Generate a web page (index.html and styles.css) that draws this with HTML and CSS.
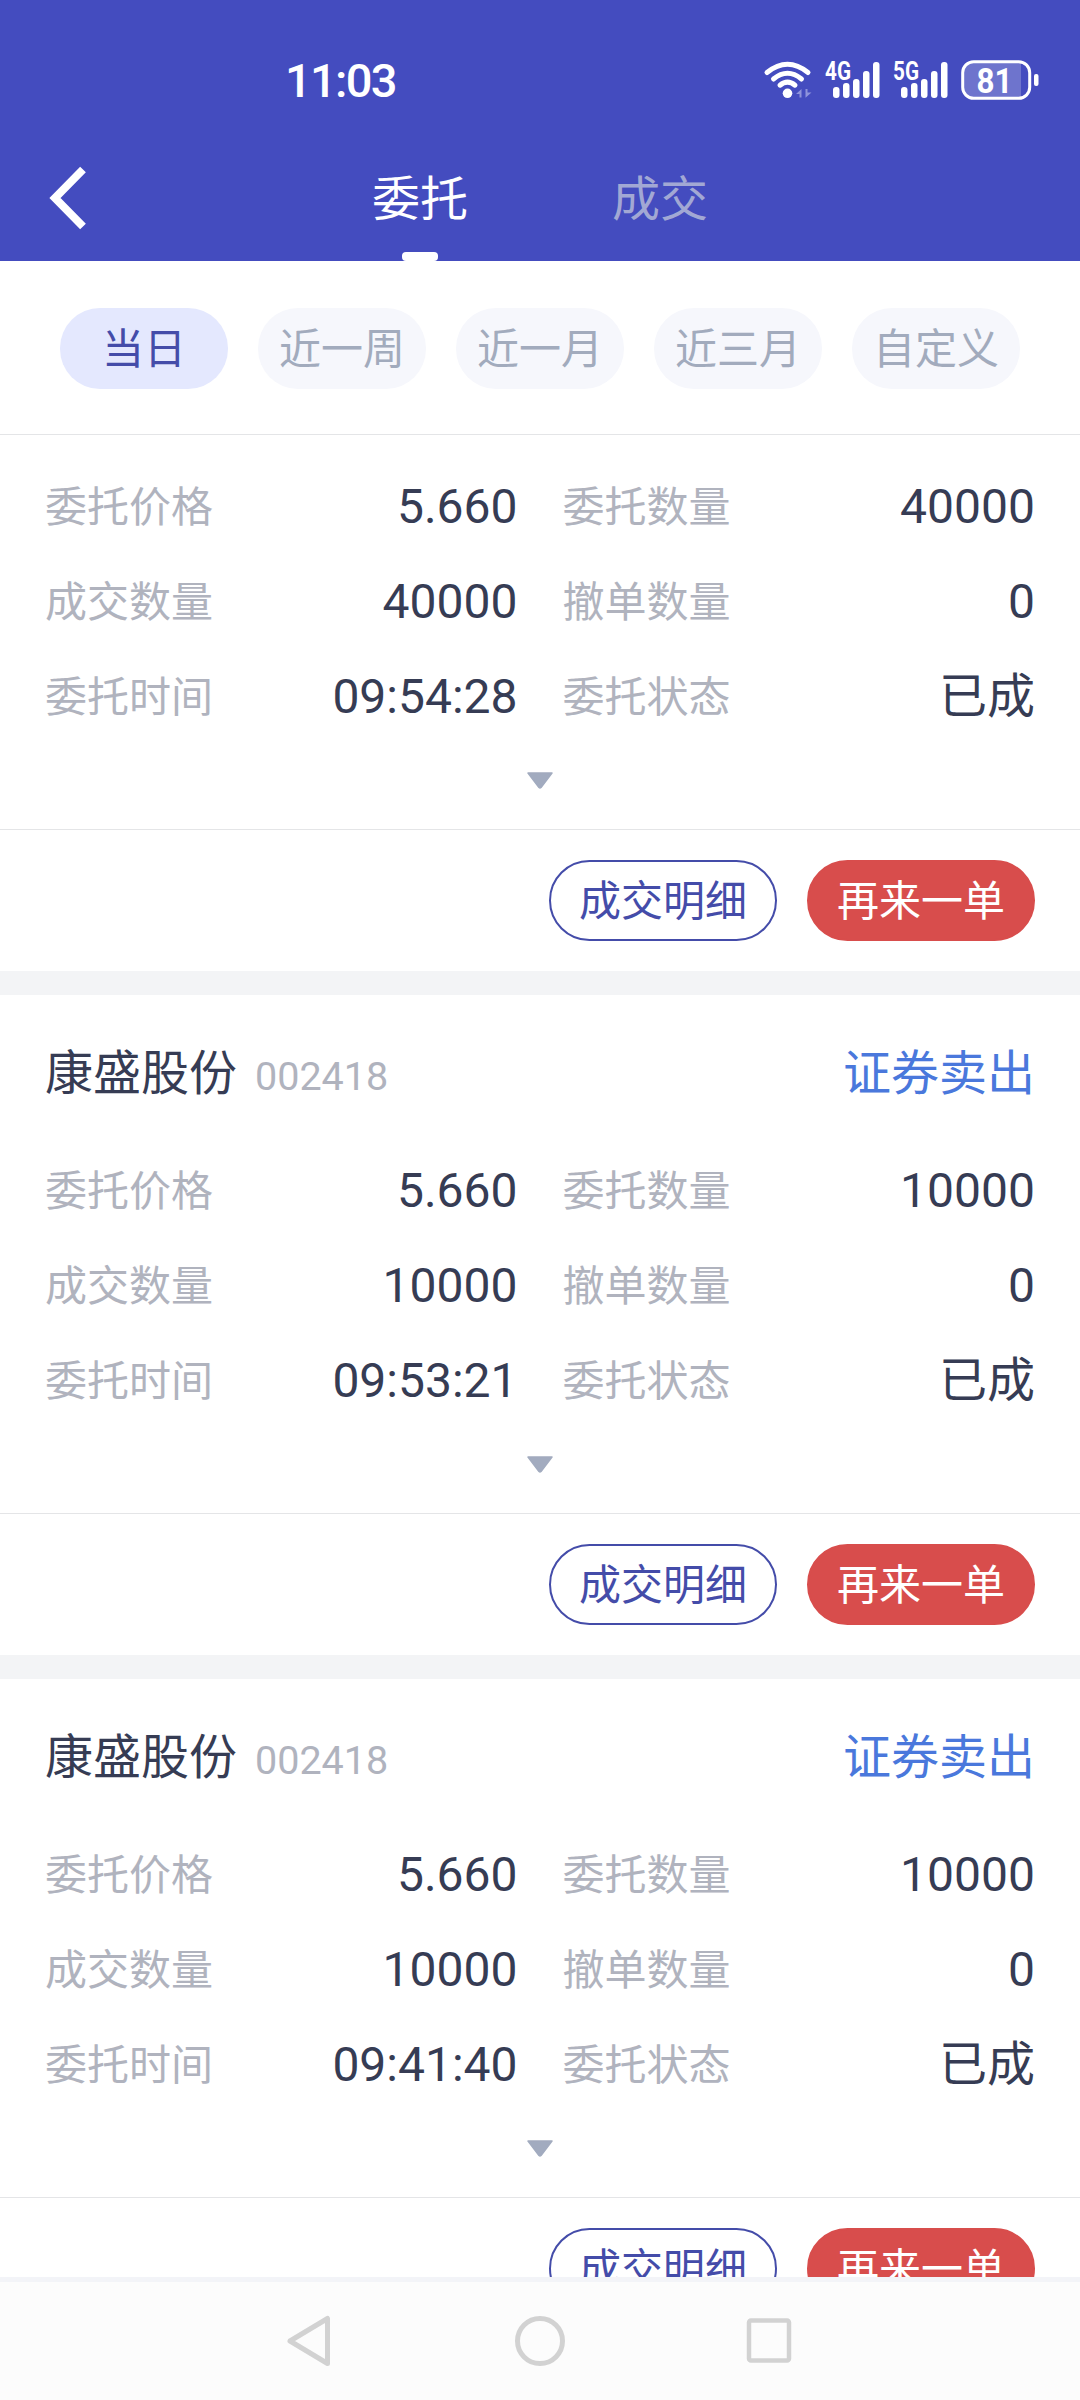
FILE: index.html
```
<!DOCTYPE html>
<html lang="zh-CN">
<head>
  <meta charset="UTF-8" />
  <meta name="viewport" content="width=device-width, initial-scale=1" />
  <title>委托</title>
  <link rel="stylesheet" href="styles.css">
</head>
<body>
  <div id="app">
    <header class="header">
      <div class="status-bar">
        <span class="clock">11:03</span>
        <div class="status-icons">
          <svg class="wifi" width="48" height="40" viewBox="0 0 48 40" aria-hidden="true">
            <g fill="none" stroke="#fff" stroke-width="5" stroke-linecap="round">
              <path d="M3 12.5 Q23.5 -4 44 12.5" />
              <path d="M9.500 19 Q23.500 7.500 37.500 19" />
              <path d="M16 25.200 Q23.500 19 31 25.200" />
            </g>
            <circle cx="23.500" cy="33.300" r="4.800" fill="#fff" />
            <path d="M32 34 L37.500 29 V37.500 H35.500 V34 Z M47.500 32.500 L41.500 37.800 V29 H43.500 V32.500 Z" fill="#8f94dc" />
          </svg>
          <svg class="signal" width="56" height="40" viewBox="0 0 56 40" aria-hidden="true">
            <text class="net" x="0" y="20" textLength="26" lengthAdjust="spacingAndGlyphs">4G</text>
            <g fill="#fff">
              <rect x="8" y="27" width="6.500" height="11" rx="3" />
              <rect x="18" y="23" width="6.500" height="15" rx="3" />
              <rect x="28" y="19" width="6.500" height="19" rx="3" />
              <rect x="38" y="11" width="6.500" height="27" rx="3" />
              <rect x="48" y="2" width="6.500" height="36" rx="3" />
            </g>
          </svg>
          <svg class="signal" width="56" height="40" viewBox="0 0 56 40" aria-hidden="true">
            <text class="net" x="0" y="20" textLength="26" lengthAdjust="spacingAndGlyphs">5G</text>
            <g fill="#fff">
              <rect x="8" y="27" width="6.500" height="11" rx="3" />
              <rect x="18" y="23" width="6.500" height="15" rx="3" />
              <rect x="28" y="19" width="6.500" height="19" rx="3" />
              <rect x="38" y="11" width="6.500" height="27" rx="3" />
              <rect x="48" y="2" width="6.500" height="36" rx="3" />
            </g>
          </svg>
          <svg class="battery" width="78" height="40" viewBox="0 0 78 40" aria-hidden="true">
            <path d="M13 3 H60 V37 H13 Q3 37 3 27 V13 Q3 3 13 3 Z" fill="#6e74cd" />
            <rect x="1.700" y="1.700" width="67" height="36.600" rx="11" fill="none" stroke="#fff" stroke-width="3" />
            <rect x="73" y="14" width="4.500" height="12" rx="2" fill="#fff" />
            <text class="level" x="15.500" y="32.500" textLength="36" lengthAdjust="spacingAndGlyphs">81</text>
          </svg>
        </div>
      </div>
      <nav class="title-bar">
        <svg class="back" width="40" height="64" viewBox="0 0 40 64" aria-label="返回">
          <path d="M35 3.500 L7 32 L35 60.500" fill="none" stroke="#fff" stroke-width="8" />
        </svg>
        <div class="tabs">
          <div class="tab active">委托</div>
          <div class="tab">成交</div>
        </div>
      </nav>
    </header>

    <div class="filters">
      <div class="pill active">当日</div>
      <div class="pill">近一周</div>
      <div class="pill">近一月</div>
      <div class="pill">近三月</div>
      <div class="pill">自定义</div>
    </div>

    <main class="orders">
      <!-- first card is scrolled under the filters, only its details are left -->
      <section class="card scrolled">
        <div class="details">
          <div class="item"><span class="label">委托价格</span><span class="value">5.660</span></div>
          <div class="item"><span class="label">委托数量</span><span class="value">40000</span></div>
          <div class="item"><span class="label">成交数量</span><span class="value">40000</span></div>
          <div class="item"><span class="label">撤单数量</span><span class="value">0</span></div>
          <div class="item"><span class="label">委托时间</span><span class="value">09:54:28</span></div>
          <div class="item"><span class="label">委托状态</span><span class="value">已成</span></div>
        </div>
        <div class="more">
          <svg width="28" height="18" viewBox="0 0 28 18"><path d="M2 1 H26 L15 15.500 Q14 16.500 13 15.500 Z" fill="#a2abbf" stroke="#a2abbf" stroke-width="1.500" stroke-linejoin="round" /></svg>
        </div>
        <div class="actions">
          <button class="btn outline">成交明细</button>
          <button class="btn solid">再来一单</button>
        </div>
      </section>

      <section class="card">
        <div class="card-head">
          <span class="name">康盛股份</span>
          <span class="code">002418</span>
          <span class="side">证券卖出</span>
        </div>
        <div class="details">
          <div class="item"><span class="label">委托价格</span><span class="value">5.660</span></div>
          <div class="item"><span class="label">委托数量</span><span class="value">10000</span></div>
          <div class="item"><span class="label">成交数量</span><span class="value">10000</span></div>
          <div class="item"><span class="label">撤单数量</span><span class="value">0</span></div>
          <div class="item"><span class="label">委托时间</span><span class="value">09:53:21</span></div>
          <div class="item"><span class="label">委托状态</span><span class="value">已成</span></div>
        </div>
        <div class="more">
          <svg width="28" height="18" viewBox="0 0 28 18"><path d="M2 1 H26 L15 15.500 Q14 16.500 13 15.500 Z" fill="#a2abbf" stroke="#a2abbf" stroke-width="1.500" stroke-linejoin="round" /></svg>
        </div>
        <div class="actions">
          <button class="btn outline">成交明细</button>
          <button class="btn solid">再来一单</button>
        </div>
      </section>

      <section class="card">
        <div class="card-head">
          <span class="name">康盛股份</span>
          <span class="code">002418</span>
          <span class="side">证券卖出</span>
        </div>
        <div class="details">
          <div class="item"><span class="label">委托价格</span><span class="value">5.660</span></div>
          <div class="item"><span class="label">委托数量</span><span class="value">10000</span></div>
          <div class="item"><span class="label">成交数量</span><span class="value">10000</span></div>
          <div class="item"><span class="label">撤单数量</span><span class="value">0</span></div>
          <div class="item"><span class="label">委托时间</span><span class="value">09:41:40</span></div>
          <div class="item"><span class="label">委托状态</span><span class="value">已成</span></div>
        </div>
        <div class="more">
          <svg width="28" height="18" viewBox="0 0 28 18"><path d="M2 1 H26 L15 15.500 Q14 16.500 13 15.500 Z" fill="#a2abbf" stroke="#a2abbf" stroke-width="1.500" stroke-linejoin="round" /></svg>
        </div>
        <div class="actions">
          <button class="btn outline">成交明细</button>
          <button class="btn solid">再来一单</button>
        </div>
      </section>
    </main>

    <footer class="sys-nav">
      <svg width="50" height="54" viewBox="0 0 50 54"><path d="M42.500 4.500 V49.500 L5 27 Z" fill="none" stroke="#d2d2d2" stroke-width="5" stroke-linejoin="round" /></svg>
      <svg width="54" height="54" viewBox="0 0 54 54"><circle cx="27" cy="27" r="22.500" fill="none" stroke="#d2d2d2" stroke-width="5" /></svg>
      <svg width="50" height="54" viewBox="0 0 50 54"><rect x="4" y="6.500" width="40" height="40" rx="2" fill="none" stroke="#d2d2d2" stroke-width="4.500" /></svg>
    </footer>
  </div>
</body>
</html>
```
FILE: styles.css
```
* {
  box-sizing: border-box;
}
body {
  margin: 0;
  font-family: Roboto, "Noto Sans CJK SC", sans-serif;
  background: #fff;
  color: #363c54;
}
svg {
  display: block;
  flex: none;
  overflow: visible;
}
#app {
  display: flex;
  flex-direction: column;
  width: 1080px;
  height: 2400px;
  overflow: hidden;
}

/* header */
.header {
  flex: none;
  height: 261px;
  background: #444cbf;
  color: #fff;
}
.status-bar {
  display: flex;
  justify-content: space-between;
  height: 100px;
  padding: 60px 41px 0 285px;
}
.clock {
  font-size: 47px;
  font-weight: 500;
  line-height: 42px;
  letter-spacing: -1.7px;
}
.status-icons {
  display: flex;
}
.wifi {
  margin-right: 13px;
}
.signal {
  margin-right: 12px;
}
.net {
  font-size: 25px;
  font-weight: 700;
  fill: #fff;
}
.level {
  font-size: 35px;
  font-weight: 700;
  fill: #fff;
}
.title-bar {
  display: flex;
  align-items: center;
  height: 127px;
  margin-top: 34px;
  padding-left: 48px;
}
.tabs {
  display: flex;
  margin-left: 212px;
}
.tab {
  display: flex;
  flex-direction: column;
  align-items: center;
  width: 240px;
  height: 127px;
  font-size: 48px;
  line-height: 131px;
  color: #a2a8d4;
}
.tab.active {
  color: #fff;
}
.tab.active::after {
  content: "";
  flex: none;
  width: 36px;
  height: 9px;
  margin-top: -13px;
  border-radius: 4px;
  background: #fff;
}

/* date filters */
.filters {
  display: flex;
  flex: none;
  gap: 30px;
  height: 174px;
  padding: 47px 60px 0;
  border-bottom: 1px solid #e4e5e7;
}
.pill {
  width: 168px;
  height: 81px;
  border-radius: 40px;
  background: #f6f7fc;
  color: #a2abbd;
  font-size: 42px;
  line-height: 84px;
  text-align: center;
}
.pill.active {
  background: #e4e8fe;
  color: #444ca9;
}

/* order list */
.orders {
  flex: 1;
  min-height: 0;
  overflow: hidden;
}
.card {
  height: 684px;
  border-bottom: 24px solid #f3f4f6;
}
.card.scrolled {
  height: 560px;
  padding-top: 24px;
}
.card-head {
  display: flex;
  align-items: baseline;
  height: 148px;
  padding: 0 45px;
  font-size: 48px;
  line-height: 158px;
}
.code {
  margin-left: 18px;
  font-size: 39.5px;
  color: #b0b3be;
}
.side {
  margin-left: auto;
  color: #4a78dc;
}
.details {
  display: grid;
  grid-template-columns: 1fr 1fr;
  column-gap: 45px;
  padding: 0 45px;
}
.item {
  display: flex;
  justify-content: space-between;
  height: 95px;
}
.label {
  font-size: 42px;
  line-height: 98px;
  color: #b0b3be;
}
.value {
  font-size: 48px;
  line-height: 95px;
}
.more {
  display: flex;
  justify-content: center;
  height: 85px;
  padding-top: 28px;
}
.actions {
  display: flex;
  justify-content: flex-end;
  gap: 30px;
  height: 142px;
  padding: 30px 45px 0;
  border-top: 1px solid #e4e5e7;
}
.btn {
  width: 228px;
  height: 81px;
  padding: 3px 0 0;
  border: 2px solid #444ca9;
  border-radius: 41px;
  background: #fff;
  color: #444ca9;
  font-family: inherit;
  font-size: 42px;
  line-height: 74px;
}
.btn.solid {
  border-color: #d84d4c;
  background: #d84d4c;
  color: #fff;
}

/* system navigation */
.sys-nav {
  display: flex;
  flex: none;
  align-items: center;
  justify-content: center;
  gap: 178px;
  height: 123px;
  border-top: 5px solid #f3f4f8;
  background: #fcfcfc;
}
```
